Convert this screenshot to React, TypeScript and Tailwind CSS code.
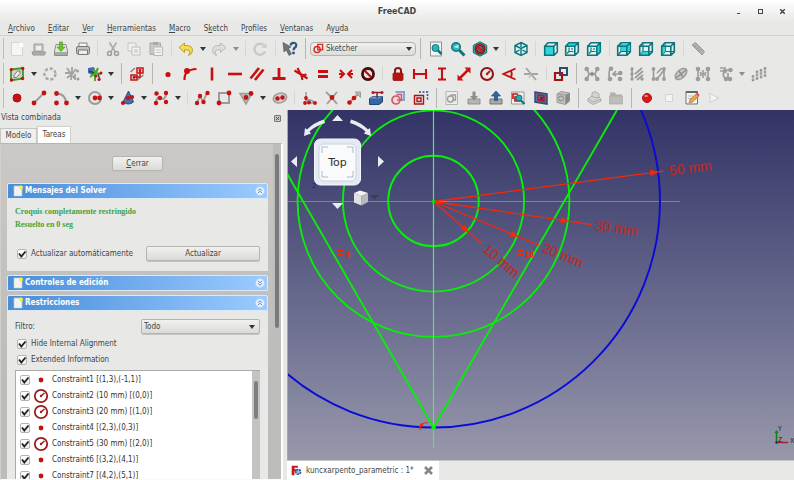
import { useState } from "react";
import type { ReactNode } from "react";

const RED = "#c81010";
const DARK = "#8c1515";
const GREY = "#9c9c9a";
const TEAL = "#0f747c";
const CYAN = "#2cd8de";

function Dots({ at, c = RED, r = 2.3 }: { at: number[][]; c?: string; r?: number }) {
  return (
    <>
      {at.map(([x, y]) => (
        <circle key={`${x}-${y}`} cx={x} cy={y} r={r} fill={c} />
      ))}
    </>
  );
}

function Stroke({ d, c = RED, w = 2 }: { d: string; c?: string; w?: number }) {
  return <path d={d} fill="none" stroke={c} strokeWidth={w} />;
}

function Cube({ face, side, inner }: { face?: string; side?: string; inner?: ReactNode }) {
  return (
    <>
      <path d="M1.500 5 5 1.500H14.500V11L11 14.500H1.500Z" fill="#dff1f1" />
      {inner}
      {side && <path d={side} fill={CYAN} />}
      {face && <path d={face} fill={CYAN} />}
      <Stroke d="M1.700 5.200H10.800V14.300H1.700ZM1.700 5.200 5 1.700H14.300V11L10.800 14.300M10.800 5.200 14.300 1.700" c={TEAL} w={1.600} />
    </>
  );
}

const wires = <Stroke d="M5 2V10.500H14M5 10.500 2 14" c={TEAL} w={1.200} />;
const spokes = <Stroke d="M5 6.500V10.500H9.500M5 10.500 3 12.500M8 7V9" c={TEAL} w={1.100} />;

const icons: Record<string, ReactNode> = {
  Nuevo: (
    <>
      <path d="M2.500 1.500H13.500V14.500H2.500Z" fill="#f6f6f5" stroke="#d3d3d0" />
      <circle cx="12" cy="4" r="3" fill="#fff" stroke="#dcdcd8" strokeWidth=".6" />
    </>
  ),
  Abrir: (
    <>
      <path d="M3 3H12V11H3Z" fill="#c6c6c3" stroke="#9e9e9b" />
      <path d="M5 5H10V9H5Z" fill="#efefed" />
      <path d="M1 11H14.500L13.500 14H2Z" fill="#b0b0ad" stroke="#969693" />
    </>
  ),
  Guardar: (
    <>
      <path d="M3 3.500H13L14.500 10V14.500H1.500V10Z" fill="#e4e4e2" stroke="#8d8d8a" />
      <path d="M2 11H14V14H2Z" fill="#a9a9a6" />
      <path d="M6.500 1H9.500V6H12L8 10.500 4 6H6.500Z" fill="#63c81e" stroke="#46961a" strokeWidth=".6" />
    </>
  ),
  Imprimir: (
    <>
      <path d="M4 2H12V6H4Z" fill="#f4f4f2" stroke="#858582" />
      <rect x="1.500" y="5.500" width="13" height="7.500" rx="1.500" fill="#c2c2bf" stroke="#777774" />
      <path d="M3.500 9H12.500V13.500H3.500Z" fill="#eee" stroke="#777774" />
    </>
  ),
  Cortar: (
    <>
      <Stroke d="M4.500 1.500 10 10.500M11.500 1.500 6 10.500" c="#aaa" w={1.600} />
      <circle cx="4.500" cy="12.500" r="2" fill="none" stroke={GREY} strokeWidth="1.500" />
      <circle cx="11.500" cy="12.500" r="2" fill="none" stroke={GREY} strokeWidth="1.500" />
    </>
  ),
  Copiar: (
    <>
      <path d="M2 2H10V10H2Z" fill="#f0f0ee" stroke="#c4c4c1" />
      <path d="M6 6H14V14H6Z" fill="#f4f4f2" stroke="#bdbdba" />
      <path d="M8 8H12V12H8Z" fill="#d8d8d5" />
    </>
  ),
  Pegar: (
    <>
      <path d="M2 2H12.500V13.500H2Z" fill="#c9c9c6" stroke="#aaaaa7" />
      <path d="M5 1H10V4H5Z" fill="#aaaaa7" />
      <path d="M6 6H14.500V14.500H6Z" fill="#f2f2f0" stroke="#b9b9b6" />
      <Stroke d="M8 9H13M8 11.500H13" c="#c6c6c3" w={1} />
    </>
  ),
  Deshacer: (
    <path d="M1 6.500 6.500 2V4.500H9.500Q14.500 5 14.500 9.500 14.500 13 10.500 14.500 12.500 11 11.500 9.800 10.700 8.700 6.500 8.800V11.500Z" fill="#f2dc55" stroke="#b79a1c" strokeWidth=".9" />
  ),
  Rehacer: (
    <path d="M15 6.500 9.500 2V4.500H6.500Q1.500 5 1.500 9.500 1.500 13 5.500 14.500 3.500 11 4.500 9.800 5.300 8.700 9.500 8.800V11.500Z" fill="#dededb" stroke="#b4b4b1" strokeWidth=".9" />
  ),
  Refrescar: (
    <>
      <Stroke d="M13 10.500A5.500 5.500 0 1 1 11.500 4" c="#c9c9c6" w={2.400} />
      <path d="M9.500 6.800H14.500V1.800Z" fill="#c9c9c6" />
    </>
  ),
  "¿Qué es esto?": (
    <>
      <path d="M1 1.500 9 6 6.500 7.500 9.500 13 7 14.500 4.300 9 2 11Z" fill="#6d7376" stroke="#4d5356" strokeWidth=".6" />
      <Stroke d="M8.500 4.500Q9 1.500 12 1.800 15 2.500 14 5.500 11.500 7.300 11.500 9.200" c="#31557d" w={2.200} />
      <circle cx="11.500" cy="12" r="1.400" fill="#31557d" />
    </>
  ),
  "Ajustar todo": (
    <>
      <path d="M2.500 1H13.500V15H2.500Z" fill="#f5f5f3" stroke="#91918e" />
      <circle cx="7.500" cy="7" r="3.500" fill="#29b5bc" stroke={TEAL} />
      <Stroke d="M10 9.500 13.500 13" c={TEAL} w={2.500} />
    </>
  ),
  "Ajustar selección": (
    <>
      <circle cx="6" cy="6" r="4.300" fill="#29b5bc" stroke={TEAL} strokeWidth="1.400" />
      <path d="M3.500 6 8.500 3.500V7.500Z" fill="#b8ecee" />
      <Stroke d="M9.300 9.300 14.500 14.500" c={TEAL} w={3} />
    </>
  ),
  "Estilo de dibujo": (
    <>
      <path d="M8 .8 14.700 4.300V11.700L8 15.200 1.300 11.700V4.300Z" fill="#25b5bc" stroke={TEAL} />
      <circle cx="8" cy="8" r="4.200" fill="#5c2020" fillOpacity=".4" stroke="#5d1212" strokeWidth="2.600" />
      <circle cx="8" cy="8" r="4.200" fill="none" stroke="#c91a1a" strokeWidth="1.400" />
      <Stroke d="M5 5 11 11" c="#c91a1a" w={1.800} />
    </>
  ),
  Isométrica: (
    <>
      <path d="M8 1.500 14 4.500V11.500L8 14.500 2 11.500V4.500Z" fill="#d9efef" />
      <Stroke d="M8 1.500 14 4.500V11.500L8 14.500 2 11.500V4.500ZM2 4.500 8 7.500 14 4.500M8 7.500V14.500M8 1.500V6M2 11.500 6.500 9M14 11.500 9.500 9" c={TEAL} w={1.400} />
    </>
  ),
  Frontal: <Cube face="M2 5.500H10.500V14H2Z" />,
  Superior: <Cube side="M1.700 5.200 5 1.700H14.300L10.800 5.200Z" inner={spokes} />,
  Derecha: <Cube side="M10.800 5.200 14.300 1.700V11L10.800 14.300Z" inner={spokes} />,
  Posterior: <Cube side="M5.500 3H13V10H5.500Z" inner={wires} />,
  Inferior: <Cube side="M2 14 5 10.800H13.500L10.500 14Z" inner={wires} />,
  Izquierda: (
    <Cube
      side="M2 5.500 5 3V10.500L2 14Z"
      inner={
        <>
          {wires}
          <path d="M2 5.500H6V10.500L2 14Z" fill="#0f8f97" />
        </>
      }
    />
  ),
  Medir: (
    <>
      <path d="M2 4 5.500 1.500 14.500 10.500 12 14Z" fill="#b2b2af" stroke="#9a9a97" />
      <Stroke d="M4.500 6 6 4.700M6.500 8 8 6.700M8.500 10 10 8.700" c="#858582" w={0.800} />
    </>
  ),
  "Ver croquis": (
    <>
      <path d="M2 3.500 14 2V12.500L2 14.500Z" fill="#cfd4ca" stroke="#3d9a22" strokeWidth="1.800" />
      <path d="M5 9.500 8.500 5H11L11 7.500 7.500 11.500H5Z" fill="#eee" stroke="#777" />
      <Dots at={[[2.300, 3.600], [13.700, 2.500], [13.500, 12.500], [2.500, 14]]} r={1.700} />
    </>
  ),
  Cerrar: <circle cx="8" cy="8" r="5.500" fill="none" stroke="#a7a7a4" strokeWidth="2.400" strokeDasharray="3 2" />,
  Seleccionar: (
    <>
      <Stroke d="M3 2 7 8M8 1V9M1 7H10M12 3 8 8M3 12 8 8 7 14M11 8V14" c="#a3a3a0" w={1.800} />
      <Dots at={[[13.500, 5], [14, 13], [10, 11]]} c={GREY} r={1.500} />
    </>
  ),
  Asociar: (
    <>
      <path d="M1 2 7 1 9 6 5 9 1 7Z" fill="#3d6da8" />
      <Stroke d="M6 3 9 8M11 2 8 9M3 11 9 7 14 8M8 9V15" c="#4fa52f" w={2} />
      <Stroke d="M2 5 7 7M11 8 13 14" c="#303830" w={1.300} />
      <Dots at={[[14, 7], [9, 10], [12, 13.500]]} r={1.500} />
    </>
  ),
  Restringir: (
    <>
      <Stroke d="M1.500 6 6 2M9 13.500 14.500 9" c="#888" w={1.600} />
      <Stroke d="M8 2H14V7H8ZM2 9H8V14H2ZM4 11H11V5" w={1.500} />
      <Dots at={[[11, 4.500], [5, 11.500]]} r={1.400} />
    </>
  ),
  Coincidente: <circle cx="8" cy="8.500" r="2.600" fill={RED} />,
  "Punto en objeto": (
    <>
      <Stroke d="M2.500 14Q2 3.500 14.500 3" w={2.200} />
      <circle cx="5" cy="5" r="3" fill={RED} />
    </>
  ),
  Vertical: <Stroke d="M8 1.500V14.500" w={2.600} />,
  Horizontal: <Stroke d="M1 8H15" w={2.600} />,
  Paralelo: <Stroke d="M1.500 12.500 10 2M6 14 14.500 3.500" w={2.600} />,
  Perpendicular: <Stroke d="M1.500 12.500H14.500M8 12.500V2" w={2.800} />,
  Tangente: <Stroke d="M1.500 4.500 14.500 12.500M4.500 2 7 7Q9 10 13.500 8.500M8 8 9.500 14" w={2.100} />,
  Igual: <Stroke d="M3 5.500H13M3 10.500H13" w={3} />,
  Simétrico: <Stroke d="M2 4 6 8 2 12M14 4 10 8 14 12M1 8H6M10 8H15" w={2} />,
  Bloquear: (
    <>
      <circle cx="8" cy="8" r="5.500" fill="none" stroke="#3a0808" strokeWidth="2.800" />
      <Stroke d="M4.500 4.500 11.500 11.500" c="#b51414" w={2.300} />
      <circle cx="8" cy="8" r="5" fill="none" stroke="#8d1616" strokeWidth=".7" />
    </>
  ),
  Fijar: (
    <>
      <Stroke d="M5 8V4.500Q5 2 8 2T11 4.500V8" c={DARK} w={2} />
      <rect x="3" y="7" width="10" height="7.500" rx="1" fill="#b81313" stroke={DARK} strokeWidth=".8" />
    </>
  ),
  "Distancia horizontal": <Stroke d="M2 3V13M14 3V13M2 8H14" w={2.100} />,
  "Distancia vertical": <Stroke d="M4 2.500H12M4 13.500H12M8 2.500V13.500" w={2.100} />,
  Distancia: (
    <>
      <Stroke d="M3 13 13 3" w={2.500} />
      <path d="M1.500 14.500V8.500L7.500 14.500ZM14.500 1.500V7.500L8.500 1.500Z" fill={RED} />
    </>
  ),
  Radio: (
    <>
      <circle cx="8" cy="8" r="6" fill="none" stroke={DARK} strokeWidth="2" />
      <Stroke d="M8 8 11 5" c={RED} w={1.800} />
      <circle cx="8" cy="8" r="1.200" fill={RED} />
    </>
  ),
  Ángulo: <Stroke d="M14.500 2.500 2.500 8 14.500 13.500M9.500 4.500Q12 8 9.500 11.500" w={1.900} />,
  "Ley de Snell": (
    <>
      <Stroke d="M1 8H15M3 2 13 14" c="#a5a5a2" w={1.900} />
      <Stroke d="M8 8 6 12" c="#c0c0bd" w={1.500} />
    </>
  ),
  Conmutar: (
    <>
      <Stroke d="M7 2H14V9H7Z" c="#2a4b7c" w={2} />
      <Stroke d="M2 7H9V14H2Z" c="#a01515" w={2.200} />
    </>
  ),
  "Cerrar forma": (
    <>
      <Stroke d="M3 3 5 8 3 13M13 3 11 8 13 13M4 8H12" c={GREY} w={1.700} />
      <path d="M5.500 8 8 5.500V10.500ZM10.500 8 8 5.500V10.500Z" fill="#8d8d8a" />
      <Dots at={[[2.700, 3], [2.700, 13], [13.300, 3], [13.300, 13]]} c={GREY} />
    </>
  ),
  "Conectar aristas": (
    <>
      <Stroke d="M3 3Q1 8 3 13M6 8H12M9 5 6 8 9 10" c={GREY} w={1.700} />
      <Dots at={[[4, 2.700], [3, 13], [13.300, 7], [13, 13]]} c={GREY} />
    </>
  ),
  "Seleccionar restricciones": (
    <>
      <Stroke d="M3 2V14M6 8 13 2M6 12 14 5M8 14 14 9" c={GREY} w={1.700} />
      <Dots at={[[3, 3], [3, 8], [3, 13], [13, 13]]} c={GREY} r={1.700} />
    </>
  ),
  "Seleccionar elementos": (
    <>
      <Stroke d="M2.500 3V13M6 7 11 2M7 12 13 4M13 4V13" c={GREY} w={1.700} />
      <Dots at={[[2.500, 3], [2.500, 13], [6, 13], [13, 3], [13, 13]]} c={GREY} r={1.900} />
    </>
  ),
  "Geometría interna": (
    <>
      <ellipse cx="8" cy="8" rx="7" ry="4" fill="#c7c7c4" stroke={GREY} strokeWidth="1.500" transform="rotate(-42 8 8)" />
      <Stroke d="M3 12 13 4M6 5 10 11" c="#8f8f8c" w={1.400} />
    </>
  ),
  Simetría: (
    <>
      <Stroke d="M3 3V13M13 3V13M8 4V12M5 6 6.500 8 5 10M11 6 9.500 8 11 10" c={GREY} w={1.600} />
      <Dots at={[[3, 3], [3, 13], [13, 3], [13, 13]]} c={GREY} />
    </>
  ),
  Clonar: (
    <>
      <Stroke d="M2 2H8M2 5H6M6 6Q4 10 8 13M9 4H14M10 7V13" c={GREY} w={1.700} />
      <Dots at={[[7, 5], [12.500, 4], [8, 13], [12, 13]]} c={GREY} />
    </>
  ),
  Matriz: (
    <>
      <Dots at={[[2, 14], [2, 10.500], [6, 12.500], [6, 9], [10, 11], [10, 7.500], [14, 9.500], [14, 6], [14, 2.500], [10, 4.500], [6, 6]]} c="#92928f" r={1.400} />
      <Stroke d="M2 14V10M6 12V6M10 11V5M14 10V3" c="#b4b4b1" w={1} />
    </>
  ),
  Punto: <circle cx="8" cy="8" r="4" fill={RED} stroke="#a80f0f" />,
  Línea: (
    <>
      <Stroke d="M3 13 13 3" c={GREY} w={1.800} />
      <Dots at={[[3, 13], [13, 3]]} r={2.400} />
    </>
  ),
  Arco: (
    <>
      <Stroke d="M4 3.500Q12 4 13 12" c={GREY} w={2} />
      <Dots at={[[3.500, 3.500], [13.500, 13], [3.500, 13]]} r={2.400} />
    </>
  ),
  Círculo: (
    <>
      <circle cx="8" cy="8" r="6" fill="none" stroke={GREY} strokeWidth="2" />
      <Dots at={[[8, 8], [12.500, 8]]} r={2.400} />
    </>
  ),
  Cónica: (
    <>
      <path d="M8.500 1 13.500 12Q8.500 16 3 12Z" fill="#3d74ad" stroke="#264d7e" />
      <Dots at={[[8, 8], [3, 13], [12, 7]]} r={2.100} />
    </>
  ),
  "B-spline": (
    <>
      <Stroke d="M3 13Q4 5 8 8T13.500 3" c={GREY} w={2} />
      <Dots at={[[3.500, 3.500], [13, 3], [3, 13], [13, 12], [7, 8]]} r={2.200} />
    </>
  ),
  Polilínea: (
    <>
      <Stroke d="M3 13 6 6 9 12 13 3" c={GREY} w={1.800} />
      <Dots at={[[3, 13], [6, 6], [9.500, 12], [13.500, 3]]} r={2.200} />
    </>
  ),
  Rectángulo: (
    <>
      <Stroke d="M3 3H13V13H3Z" c={GREY} w={2} />
      <Dots at={[[13, 3], [3, 13]]} r={2.400} />
    </>
  ),
  Polígono: (
    <>
      <path d="M2 3.500H14L8 14Z" fill="#bdbdb9" stroke={GREY} strokeWidth="1.500" />
      <Dots at={[[13, 3.500], [8, 7.500]]} r={2.400} />
    </>
  ),
  Ranura: (
    <>
      <ellipse cx="8" cy="8" rx="6.800" ry="4.800" fill="#d2d2cf" stroke={GREY} strokeWidth="1.500" transform="rotate(-15 8 8)" />
      <Dots at={[[5.500, 8.500], [10.500, 7.500]]} r={2.200} />
    </>
  ),
  Redondeo: (
    <>
      <Stroke d="M4 2V11Q8 8 13 13M2 13H14" c={GREY} w={1.500} />
      <Dots at={[[4, 8], [7, 12.500], [3, 13], [13, 13]]} r={1.900} />
    </>
  ),
  Recortar: (
    <>
      <Stroke d="M2 2Q8 7 13 14M13 2 3 14" c={GREY} w={1.800} />
      <circle cx="8" cy="7.500" r="2.400" fill={RED} />
    </>
  ),
  Extender: (
    <>
      <Stroke d="M4 12 12 4" c={GREY} w={2} />
      <path d="M9 2H14.500V7.500Z" fill="#b9b9b6" stroke={GREY} />
      <Dots at={[[3.500, 12.500], [8, 8]]} r={2.300} />
    </>
  ),
  "Geometría externa": (
    <>
      <path d="M1.500 8.500 5 6.500H14.500V12L11 14.500H1.500Z" fill="#3566a3" stroke="#214575" />
      <path d="M1.500 8.500 5 6.500H14.500L11 8.500Z" fill="#6d99c9" />
      <Stroke d="M4 2.500H14M9 3V8" c="#852233" w={1.500} />
      <Dots at={[[5, 2.500], [14, 2.500]]} r={1.500} />
    </>
  ),
  "Copia al carbón": (
    <>
      <Stroke d="M5.500 2H14V10H8" c="#8aa0d8" w={2} />
      <circle cx="6" cy="10" r="4" fill="#eed9e0" stroke="#cf5a68" strokeWidth="1.700" />
      <Stroke d="M6.500 4.500H11.500V10H7" c="#cf5a68" w={1.500} />
    </>
  ),
  Construcción: (
    <>
      <path d="M6 2H14.500V10" fill="none" stroke="#2b4e8e" strokeWidth="1.500" strokeDasharray="2 1.500" />
      <Stroke d="M1.500 5.500H10.500V14H1.500ZM4 8H8V11.500H4Z" c="#b01313" w={1.400} />
    </>
  ),
  Croquis: (
    <>
      <path d="M2 1.500H13.500V14.500H2Z" fill="#ececea" stroke="#b5b5b2" />
      <circle cx="6.500" cy="9" r="3" fill="none" stroke={GREY} strokeWidth="1.300" />
      <Stroke d="M6.500 5H11.500V10H8" c={GREY} w={1.300} />
    </>
  ),
  Importar: (
    <>
      <path d="M2 9H14V14H2Z" fill="#b5b5b2" stroke="#91918e" />
      <path d="M6.500 1.500H9.500V6H12L8 10.500 4 6H6.500Z" fill="#8d8d8a" />
    </>
  ),
  Exportar: (
    <>
      <path d="M2 9H14V14H2Z" fill="#a9a9a6" stroke="#777774" />
      <path d="M6.500 10.500H9.500V6H12.500L8 1 3.500 6H6.500Z" fill="#2c65aa" stroke="#20477a" strokeWidth=".7" />
    </>
  ),
  "Ver sección": (
    <>
      <path d="M1.500 2H14V14H1.500Z" fill="#f6eeee" stroke="#999" />
      <Stroke d="M3 9V4H8M5 7H10V11H5Z" w={1.600} />
      <circle cx="9" cy="8" r="3" fill="#26aeb5" stroke={TEAL} />
      <Stroke d="M11 10.500 14.500 14" c={TEAL} w={2.200} />
    </>
  ),
  "Vista de sección": (
    <>
      <path d="M2 2 14 4V14L2 12Z" fill="#53709f" stroke="#324c76" strokeWidth="1.500" />
      <Stroke d="M5 5 11 6V11L5 10Z" c="#b31a2d" w={1.500} />
      <path d="M7 7H10V10H7Z" fill="#6d2540" />
    </>
  ),
  Cuerpo: (
    <>
      <path d="M2 4 6 1.500 14.500 3V11L10.500 14.500 2 12.500Z" fill="#c0c0bd" stroke={GREY} />
      <path d="M10.500 5 14.500 3V11L10.500 14.500Z" fill="#878784" />
      <circle cx="6" cy="8.500" r="2.500" fill="none" stroke="#888" />
      <Stroke d="M2 4 10.500 5V14" c="#999" w={1} />
    </>
  ),
  Pieza: (
    <>
      <path d="M2 9 6 6V3L9 1.500 13 4V7L15 9V11L7 14.500 2 11.500Z" fill="#d4d4d1" stroke="#adadaa" />
      <Stroke d="M2 9 7 12 15 9M6 6 10 8 13 7" c="#adadaa" w={1} />
    </>
  ),
  Grupo: (
    <>
      <path d="M2 2.500H7L8 4.500H14V13.500H2Z" fill="#b2b2af" />
      <path d="M1.500 6H14.500V14H1.500Z" fill="#bcbcb9" stroke="#aaaaa7" strokeWidth=".7" />
    </>
  ),
  "Grabar macro": (
    <>
      <circle cx="8" cy="8" r="4.500" fill="#dc1717" stroke="#af1111" />
      <ellipse cx="7" cy="6" rx="2" ry="1" fill="#f18a8a" />
    </>
  ),
  "Detener macro": <path d="M4.500 4.500H11.500V11.500H4.500Z" fill="#f4f4f2" stroke="#d2d2cf" />,
  Macros: (
    <>
      <path d="M2 1.500H13.500V14H2Z" fill="#f4f4f2" stroke="#777774" />
      <path d="M2 1H13.500V3H2Z" fill="#656562" />
      <Stroke d="M4 6H9M4 8.500H8" c="#bbb" w={1} />
      <path d="M5 13 6 9.500 12.500 3.500 15 6 8.500 12Z" fill="#eca14d" stroke="#a86925" strokeWidth=".6" />
      <path d="M12 4 13.500 2.500 15.500 5 14.500 6.500Z" fill="#d84c5f" />
    </>
  ),
  "Ejecutar macro": <path d="M4 3.500 12.500 8 4 12.500Z" fill="#f4f4f2" stroke="#cfcfcc" />,
};

const rows = [
  "Nuevo|Abrir|Guardar|Imprimir|-|Cortar|Copiar|Pegar|-|Deshacer|v|Rehacer|w|-|Refrescar|-|¿Qué es esto?|#|combo|#|Ajustar todo|Ajustar selección|Estilo de dibujo|v|-|Isométrica|-|Frontal|Superior|Derecha|-|Posterior|Inferior|Izquierda|-|Medir",
  "Ver croquis|v|Cerrar|Seleccionar|Asociar|v|#|Restringir|#|Coincidente|Punto en objeto|Vertical|Horizontal|Paralelo|Perpendicular|Tangente|Igual|Simétrico|Bloquear|-|Fijar|Distancia horizontal|Distancia vertical|Distancia|Radio|Ángulo|Ley de Snell|-|Conmutar|#|Cerrar forma|Conectar aristas|Seleccionar restricciones|Seleccionar elementos|Geometría interna|Simetría|Clonar|w|Matriz",
  "Punto|Línea|Arco|v|Círculo|v|Cónica|v|B-spline|v|-|Polilínea|Rectángulo|Polígono|v|Ranura|-|Redondeo|Recortar|Extender|Geometría externa|Copia al carbón|Construcción|#|Croquis|Importar|Exportar|Ver sección|Vista de sección|Cuerpo|#|Pieza|Grupo|#|Grabar macro|Detener macro|Macros|Ejecutar macro",
].map((row) => row.split("|"));

const rowSizes = ["h-[25px] w-[709px]", "h-[25px] w-[770px]", "h-[24px] w-[725px]"];

function Caret({ pale = false }: { pale?: boolean }) {
  return (
    <svg width="6" height="4" viewBox="0 0 6 4" aria-hidden="true">
      <path d="M0 0H6L3 4Z" fill={pale ? "#8e8e8b" : "#30363a"} />
    </svg>
  );
}

function WorkbenchSelect() {
  return (
    <div className="relative flex w-[106px] shrink-0 items-center">
      <select
        aria-label="Banco de trabajo"
        className="h-[14px] w-full appearance-none rounded-sm border border-[#b2b2af] bg-linear-to-b from-[#f0f0ee] to-[#dcdcd9] pl-[15px] leading-[12px]"
      >
        <option>Sketcher</option>
      </select>
      <svg className="pointer-events-none absolute left-[3px]" width="11" height="11" viewBox="0 0 16 16" aria-hidden="true">
        <Stroke d="M7 2H14V10H7Z" c="#d42a2a" w={2} />
        <circle cx="6" cy="9.500" r="4.500" fill="none" stroke="#d42a2a" strokeWidth="2" />
      </svg>
      <span className="pointer-events-none absolute right-1">
        <Caret />
      </span>
    </div>
  );
}

function Toolbar({ items, size }: { items: string[]; size: string }) {
  return (
    <div role="toolbar" className={`flex items-stretch ${size}`}>
      <span className="my-[2px] mr-[2px] ml-[3px] w-px shrink-0 bg-[#bdbdba]" />
      {items.map((item, i) => {
        if (item === "combo") return <WorkbenchSelect key={i} />;
        if (item === "-")
          return (
            <span key={i} className="flex w-2 shrink-0 justify-center py-[5px]">
              <span className="w-px bg-[#d6d6d3]" />
            </span>
          );
        if (item === "#")
          return (
            <span key={i} className="flex w-[9px] shrink-0 justify-center py-[2px]">
              <span className="w-px bg-[#b4b4b1]" />
            </span>
          );
        if (item === "v" || item === "w")
          return (
            <button key={i} aria-label="Más opciones" className="flex w-[11px] shrink-0 items-center justify-center">
              <Caret pale={item === "w"} />
            </button>
          );
        return (
          <button key={i} aria-label={item} className="flex min-w-0 flex-1 items-center justify-center">
            <svg className="shrink-0" width="16" height="16" viewBox="0 0 16 16" aria-hidden="true">
              {icons[item]}
            </svg>
          </button>
        );
      })}
    </div>
  );
}

const menus = [
  ["", "A", "rchivo"],
  ["", "E", "ditar"],
  ["", "V", "er"],
  ["", "H", "erramientas"],
  ["", "M", "acro"],
  ["S", "k", "etch"],
  ["P", "r", "ofiles"],
  ["", "V", "entanas"],
  ["Ay", "u", "da"],
];

function Check({ label, children }: { label?: string; children?: ReactNode }) {
  const [on, setOn] = useState(true);
  return (
    <label className="flex items-center gap-1">
      <span className="relative flex size-[10px] shrink-0">
        <input
          type="checkbox"
          aria-label={label}
          checked={on}
          onChange={() => setOn(!on)}
          className="peer size-[10px] appearance-none rounded-[2px] border border-[#b4b4b1] bg-linear-to-b from-white to-[#eeeeec]"
        />
        <svg className="pointer-events-none absolute inset-0 opacity-0 peer-checked:opacity-100" width="10" height="10" viewBox="0 0 10 10" aria-hidden="true">
          <path d="M2 4.500 4.300 7.500 8.500 2.500" fill="none" stroke="#202426" strokeWidth="1.900" />
        </svg>
      </span>
      {children}
    </label>
  );
}

function SectionHeader({ title, open }: { title: string; open: boolean }) {
  return (
    <button
      aria-expanded={open}
      className="flex h-4 w-full shrink-0 items-center rounded-t-[2px] border border-[#dce8f5] bg-linear-to-r from-[#468ddb] to-[#9bcbff] pr-[2px] pl-1 text-left font-bold text-white"
    >
      <svg width="12" height="12" viewBox="0 0 12 12" aria-hidden="true">
        <path d="M2 1H10V11H2Z" fill="#f3f3ee" stroke="#c9cdc8" strokeWidth=".6" />
        <circle cx="9" cy="2.500" r="2" fill="#f4ec4b" />
      </svg>
      <span className="ml-px flex-1">{title}</span>
      <svg width="10" height="10" viewBox="0 0 10 10" aria-hidden="true">
        <circle cx="5" cy="5" r="4.300" fill="#eaf3fd" stroke="#c3d9f0" strokeWidth=".6" />
        <path
          d={open ? "M3 4.700 5 2.700 7 4.700M3 7.200 5 5.200 7 7.200" : "M3 2.800 5 4.800 7 2.800M3 5.300 5 7.300 7 5.300"}
          fill="none"
          stroke="#4580c0"
        />
      </svg>
    </button>
  );
}

const constraints = [
  { text: "Constraint1 [(1,3),(-1,1)]", radius: false },
  { text: "Constraint2 (10 mm) [(0,0)]", radius: true },
  { text: "Constraint3 (20 mm) [(1,0)]", radius: true },
  { text: "Constraint4 [(2,3),(0,3)]", radius: false },
  { text: "Constraint5 (30 mm) [(2,0)]", radius: true },
  { text: "Constraint6 [(3,2),(4,1)]", radius: false },
  { text: "Constraint7 [(4,2),(5,1)]", radius: false },
];

const pushButton = "rounded-[2px] border border-[#b4b4b1] bg-linear-to-b from-[#f1f1ef] to-[#dadad7] shadow-[0_1px_0_#c4c4c1]";

function TaskPanel() {
  return (
    <aside className="flex w-[283px] shrink-0 flex-col">
      <header className="flex h-4 shrink-0 items-center justify-between pr-[2px] pl-px">
        <h2>Vista combinada</h2>
        <button aria-label="Desacoplar panel" className="flex size-[7px] items-center justify-center rounded-[1px] border border-[#777] bg-[#c8c8c5]">
          <svg width="5" height="5" viewBox="0 0 5 5" aria-hidden="true">
            <path d="M1 1 4 4M4 1 1 4" stroke="#555" />
          </svg>
        </button>
      </header>
      <div role="tablist" className="flex h-[17px] shrink-0 items-end">
        <button role="tab" aria-selected="false" className="h-[15px] w-[37px] border border-b-0 border-[#c6c6c3] bg-[#efefed]">
          Modelo
        </button>
        <button role="tab" aria-selected="true" className="h-[17px] w-[34px] border border-b-0 border-[#d0d0cd] bg-white">
          Tareas
        </button>
      </div>
      <div className="flex min-h-0 flex-1 border-y border-r-2 border-l border-t-[#b5b5b2] border-r-white border-b-[#fafafa] border-l-[#d0d0cd] bg-linear-to-b from-[#ccc8c5] to-[#bcbcba] to-70%">
        <div className="flex min-w-0 flex-1 flex-col overflow-hidden pr-[5px] pl-[6px]">
          <button className={`mx-auto mt-[12px] h-[15px] w-[51px] shrink-0 ${pushButton}`}>
            <span className="underline">C</span>errar
          </button>
          <section className="mt-3">
            <SectionHeader title="Mensajes del Solver" open />
            <div className="h-[72px] bg-[#e8e8e6] px-2 pt-[6px]">
              <p className="font-['Liberation_Serif',serif] text-[8px] leading-[13px] font-bold text-[#41a341]">
                Croquis completamente restringido
                <br />
                Resuelto en 0 seg
              </p>
              <div className="mt-[15px] flex items-center justify-between">
                <div className="pl-[2px]">
                  <Check>Actualizar automáticamente</Check>
                </div>
                <button className={`h-[15px] w-[114px] ${pushButton}`}>Actualizar</button>
              </div>
            </div>
          </section>
          <section className="mt-1">
            <SectionHeader title="Controles de edición" open={false} />
          </section>
          <section className="mt-1 flex min-h-0 flex-1 flex-col">
            <SectionHeader title="Restricciones" open />
            <div className="flex min-h-0 flex-1 flex-col bg-[#e8e8e6] px-2 pt-2">
              <div className="flex items-center justify-between">
                <label htmlFor="filtro">Filtro:</label>
                <div className="relative flex w-[119px] items-center">
                  <select id="filtro" className={`h-[15px] w-full appearance-none pl-[2px] leading-[13px] ${pushButton}`}>
                    <option>Todo</option>
                  </select>
                  <span className="pointer-events-none absolute right-[5px]">
                    <Caret />
                  </span>
                </div>
              </div>
              <div className="mt-[5px] flex flex-col gap-[6px] pl-[2px]">
                <Check>Hide Internal Alignment</Check>
                <Check>Extended Information</Check>
              </div>
              <div className="mt-[5px] flex min-h-0 flex-1 border-t border-l border-[#aaaaa7] bg-white">
                <ul className="min-h-0 flex-1 overflow-hidden pt-px">
                  {constraints.map((c) => (
                    <li key={c.text} className="flex h-4 items-center pl-[4px]">
                      <Check label={c.text} />
                      <svg className="mr-[3px] ml-[3px]" width="16" height="16" viewBox="0 0 16 16" aria-hidden="true">
                        {c.radius ? (
                          <>
                            <circle cx="8" cy="8" r="6.200" fill="none" stroke="#9c1c1c" strokeWidth="1.800" />
                            <Stroke d="M8 8 11.500 5" c="#9c1c1c" w={1.600} />
                            <circle cx="8" cy="8" r="1.200" fill="#9c1c1c" />
                          </>
                        ) : (
                          <circle cx="8" cy="8" r="2.400" fill={RED} />
                        )}
                      </svg>
                      <span className="text-[#2f3335]">{c.text}</span>
                    </li>
                  ))}
                </ul>
                <div className="flex w-2 justify-center bg-[#c3c3c1] pt-[10px]">
                  <span className="h-[38px] w-1 rounded-full bg-[#7b7f82]" />
                </div>
              </div>
            </div>
          </section>
        </div>
        <div className="flex w-2 shrink-0 justify-center bg-[#bdbdbb] pt-[10px]">
          <span className="h-[174px] w-1 rounded-full bg-[#777b7e]" />
        </div>
      </div>
    </aside>
  );
}

const dimensions = [
  { label: "50 mm", angle: -7.500, tip: 226, end: 232, at: 259 },
  { label: "30 mm", angle: 8.300, tip: 136, end: 160, at: 185 },
  { label: "20 mm", angle: 22.500, tip: 91, end: 114, at: 140 },
  { label: "10 mm", angle: 41, tip: 46, end: 64, at: 90 },
];

function SketchView() {
  return (
    <svg
      className="block min-h-0 w-full flex-1 border-l border-[#a7a7b3] bg-linear-to-b from-[#333366] to-[#9898ac]"
      viewBox="288 110 506 350"
      preserveAspectRatio="xMinYMin slice"
      role="img"
      aria-label="Croquis kuncxarpento_parametric"
    >
      <path d="M287 201.500H680" stroke="#c96570" strokeWidth="1.200" />
      <g fill="none" stroke="#09ee09" strokeWidth="1.900">
        <circle cx="433.500" cy="201" r="45.300" />
        <circle cx="433.500" cy="201" r="90.600" />
        <circle cx="433.500" cy="201" r="135.900" />
        <path d="M287 173.500 433.500 427.500 617 110" />
      </g>
      <circle cx="433.500" cy="201" r="226.500" fill="none" stroke="#0a0ad8" strokeWidth="1.900" />
      <path d="M433.500 110V448" stroke="#65dd71" strokeWidth="1.200" />
      <circle cx="433.500" cy="427.500" r="2.200" fill="#08f508" />
      <g fill="#f52808" stroke="#f52808">
        {dimensions.map((d) => (
          <g key={d.label} transform={`translate(433.500 201.500) rotate(${d.angle})`}>
            <path d={`M0 0H${d.end}`} strokeWidth="1.300" />
            <path d={`M${d.tip} 0L${d.tip - 7} -3V3Z`} strokeWidth=".5" />
            <text x={d.at} y="5" textAnchor="middle" stroke="#b92c28" strokeWidth=".3" fill="#b92c28" className="font-['Liberation_Sans',sans-serif] text-[14px]">
              {d.label}
            </text>
          </g>
        ))}
        <path d="M338 250.500H344M338 254.500H344M517 250.500H523M517 254.500H523" strokeWidth="1.700" />
        <text x="346" y="257" stroke="none" className="text-[7px] font-bold">9</text>
        <text x="525" y="257" stroke="none" className="text-[7px] font-bold">10</text>
        <path d="M420 430Q419 423 428 422.500" fill="none" strokeWidth="1.200" />
        <circle cx="421.500" cy="425" r="1.700" stroke="none" />
      </g>
      <circle cx="433.500" cy="201.500" r="2" fill="#12d212" />

      <text x="312" y="188" fill="#2020c8" className="text-[8px]">z</text>
      <g fill="#e8edf4">
        <path d="M337.500 115 343 121H332ZM337.500 209 343 203H332ZM291 161.500 297 156V167ZM384 161.500 378 156V167Z" />
        <path d="M324 119.500 325 123Q316 125.500 309.500 131.500L311 133.500 304 136 305 128 307 129.500Q314 122.500 324 119.500Z" />
        <path d="M351 119.500 350 123Q359 125.500 365.500 131.500L364 133.500 371 136 370 128 368 129.500Q361 122.500 351 119.500Z" />
      </g>
      <rect x="314.500" y="139" width="46" height="46" rx="6" fill="#e4eaf3" stroke="#f4f7fb" />
      <rect x="319" y="144" width="37" height="37" rx="5" fill="#f8fafc" stroke="#cad2dd" />
      <path d="M322 153V147H328M347 147H353V153M353 171V177H347M328 177H322V171" fill="none" stroke="#b2b8ce" />
      <text x="337.500" y="166" textAnchor="middle" fill="#303235" className="font-['DejaVu_Sans',sans-serif] text-[11px]">
        Top
      </text>
      <path d="M354 193 360 190.500 368 193 361.500 196Z" fill="#f4f4f4" />
      <path d="M354 193 361.500 196V205.500L354 202.500Z" fill="#e0e0e0" />
      <path d="M361.500 196 368 193V202L361.500 205.500Z" fill="#bababa" />
      <path d="M370 195H379L374.500 200Z" fill="#3f3f48" />

      <path d="M776.500 442V431" stroke="#138013" strokeWidth="1.500" />
      <path d="M774.500 433 776.500 430 778.500 433Z" fill="#138013" />
      <path d="M776.500 442.500H788" stroke="#a52020" strokeWidth="1.500" />
      <circle cx="776.500" cy="442.500" r="1.200" fill="#1b1bb5" />
      <g fill="#25252d" className="text-[7px]">
        <text x="778" y="431">Y</text>
        <text x="778" y="442">Z</text>
        <text x="790" y="443">X</text>
      </g>
    </svg>
  );
}

function DocumentTab() {
  return (
    <div role="tablist" className="flex h-5 shrink-0 items-stretch border-t border-[#c4c4c1]">
      <div className="flex w-[152px] items-center bg-white pl-1">
        <svg width="11" height="11" viewBox="0 0 16 16" aria-hidden="true">
          <path d="M1 1H10V4H5V6H9V9H5V15H1Z" fill="#c51920" />
          <circle cx="10.500" cy="10" r="3.500" fill="#9db9df" stroke="#3c5e94" strokeWidth="2.400" strokeDasharray="3 1" />
        </svg>
        <button role="tab" aria-selected="true" className="ml-1 flex-1 text-left">
          kuncxarpento_parametric : 1*
        </button>
        <button aria-label="Cerrar documento" className="mr-[6px]">
          <svg width="9" height="9" viewBox="0 0 9 9" aria-hidden="true">
            <path d="M1 1 8 8M8 1 1 8" stroke="#858583" strokeWidth="2.600" />
          </svg>
        </button>
      </div>
    </div>
  );
}

export default function App() {
  return (
    <div className="flex h-screen flex-col overflow-hidden bg-[#e8e8e6] font-['DejaVu_Sans_Condensed','DejaVu_Sans',sans-serif] text-[8px] leading-[10px] text-[#414648]">
      <header className="shrink-0 border-b border-[#d0d0cd] bg-linear-to-b from-white to-[#e8e8e6] to-60%">
        <div className="grid h-[23px] grid-cols-[1fr_auto_1fr] items-center">
          <span />
          <h1 className="font-['DejaVu_Sans',sans-serif] font-bold">FreeCAD</h1>
          <div className="flex items-center justify-end gap-[14px] pr-2">
            <button aria-label="Minimizar" className="flex size-2 items-center justify-center">
              <span className="mt-[3px] h-px w-[3px] bg-[#3c464b]" />
            </button>
            <button aria-label="Maximizar" className="flex size-2 items-center justify-center">
              <span className="size-[5px] border border-[#3c464b]" />
            </button>
            <button aria-label="Cerrar" className="flex size-2 items-center justify-center">
              <svg width="5" height="5" viewBox="0 0 5 5" aria-hidden="true">
                <path d="M0 0 5 5M5 0 0 5" stroke="#3c464b" strokeWidth="1.400" />
              </svg>
            </button>
          </div>
        </div>
        <nav className="flex h-3 items-center gap-[13px] pl-2">
          {menus.map(([before, key, after]) => (
            <button key={after}>
              {before}
              <span className="underline">{key}</span>
              {after}
            </button>
          ))}
        </nav>
      </header>
      <div className="shrink-0">
        {rows.map((items, i) => (
          <Toolbar key={i} items={items} size={rowSizes[i]} />
        ))}
      </div>
      <main className="flex min-h-0 flex-1 gap-1">
        <TaskPanel />
        <div className="flex min-w-0 flex-1 flex-col">
          <SketchView />
          <DocumentTab />
        </div>
      </main>
    </div>
  );
}
